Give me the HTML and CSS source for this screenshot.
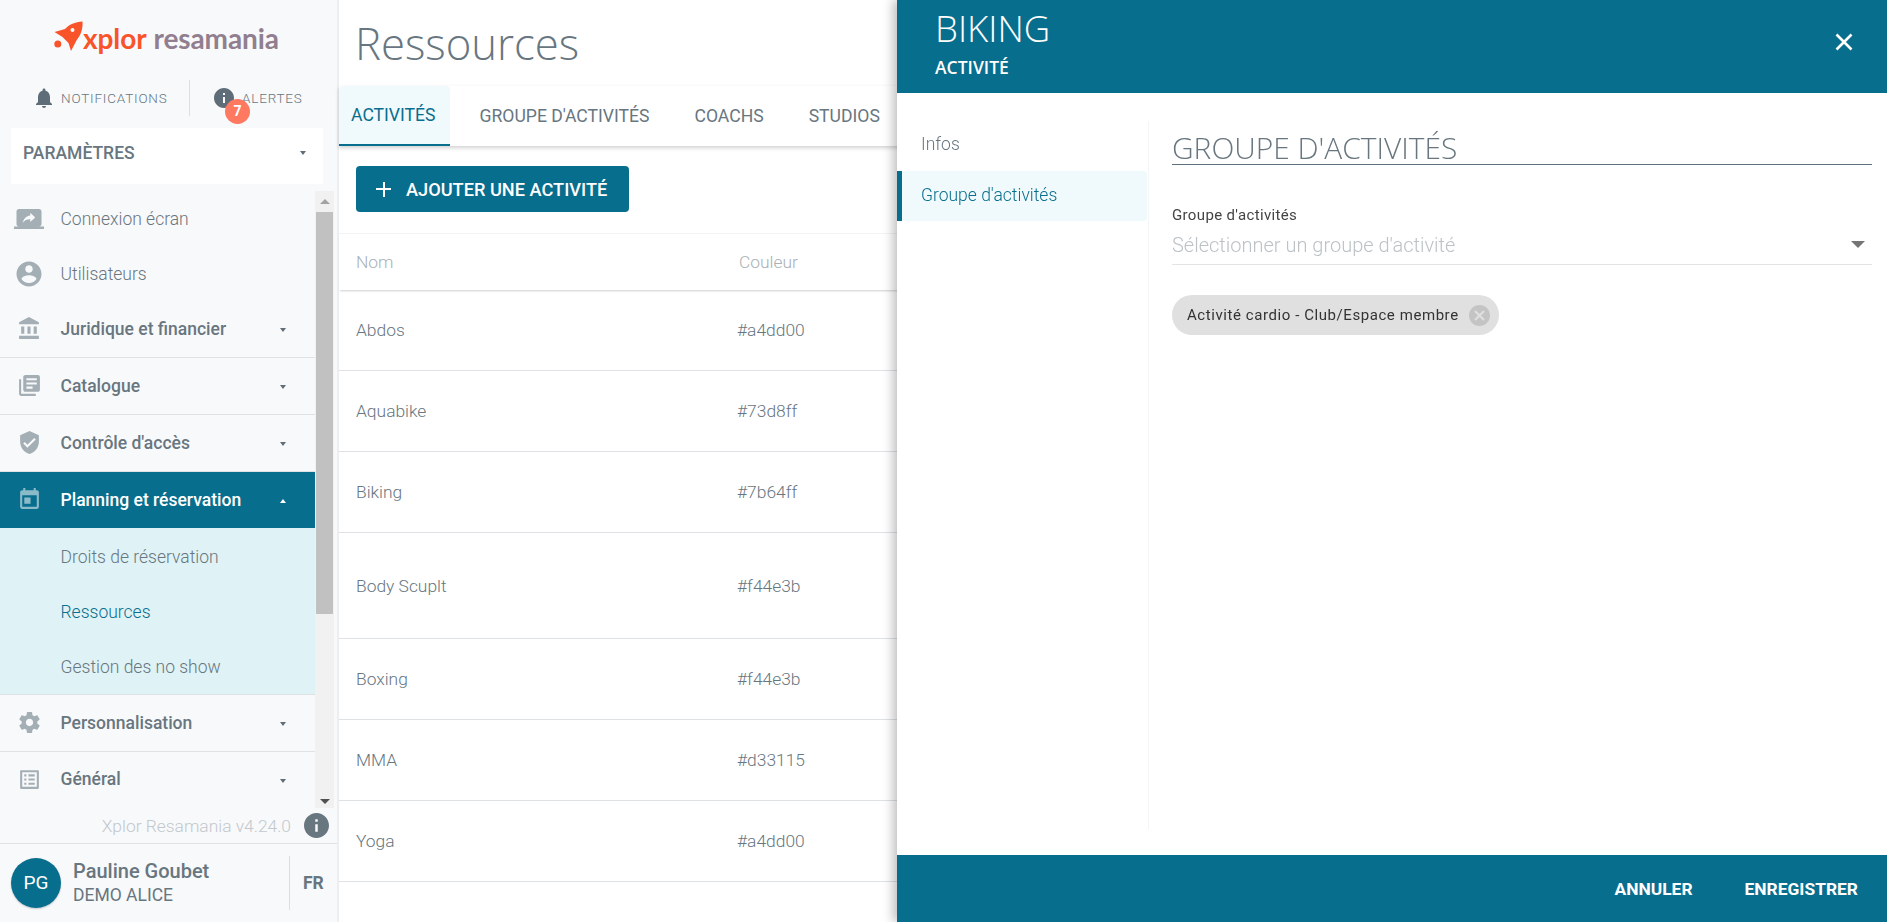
FILE: index.html
```html
<!DOCTYPE html>
<html lang="fr">
<head>
  <meta charset="UTF-8">
  <title>Ressources - Xplor Resamania</title>
  <link rel="stylesheet" href="styles.css">
</head>
<body>
  <svg class="icon-defs" width="0" height="0">
    <symbol id="i-bell" viewBox="0 0 24 24"><path d="M12 22c1.1 0 2-.9 2-2h-4c0 1.1.9 2 2 2zm6-6v-5c0-3.07-1.63-5.64-4.5-6.32V4c0-.83-.67-1.5-1.5-1.5s-1.5.67-1.5 1.5v.68C7.64 5.36 6 7.92 6 11v5l-2 2v1h16v-1l-2-2z"/></symbol>
    <symbol id="i-info" viewBox="2 2 20 20"><path d="M12 2C6.48 2 2 6.48 2 12s4.48 10 10 10 10-4.48 10-10S17.52 2 12 2zm1 15h-2v-6h2v6zm0-8h-2V7h2v2z"/></symbol>
    <symbol id="i-screen" viewBox="0 0 24 24"><path d="M20 18c1.1 0 1.99-.9 1.99-2L22 6c0-1.11-.9-2-2-2H4c-1.11 0-2 .89-2 2v10c0 1.1.89 2 2 2H0v2h24v-2h-4zm-7-3.53v-2.19c-2.78 0-4.61.85-6 2.72.56-2.67 2.11-5.33 6-5.87V7l4 3.73-4 3.74z"/></symbol>
    <symbol id="i-user" viewBox="0 0 24 24"><path d="M12 2C6.48 2 2 6.48 2 12s4.48 10 10 10 10-4.48 10-10S17.52 2 12 2zm0 3c1.66 0 3 1.34 3 3s-1.34 3-3 3-3-1.34-3-3 1.34-3 3-3zm0 14.2c-2.5 0-4.71-1.28-6-3.22.03-1.99 4-3.08 6-3.08 1.99 0 5.97 1.09 6 3.08-1.29 1.94-3.5 3.22-6 3.22z"/></symbol>
    <symbol id="i-bank" viewBox="0 0 24 24"><path d="M4 10v7h3v-7H4zm6 0v7h3v-7h-3zM2 22h19v-3H2v3zm14-12v7h3v-7h-3zm-4.5-9L2 6v2h19V6l-9.5-5z"/></symbol>
    <symbol id="i-books" viewBox="0 0 24 24"><path d="M4 6H2v14c0 1.1.9 2 2 2h14v-2H4V6zm16-4H8c-1.1 0-2 .9-2 2v12c0 1.1.9 2 2 2h12c1.1 0 2-.9 2-2V4c0-1.1-.9-2-2-2zm-1 9H9V9h10v2zm-4 4H9v-2h6v2zm4-8H9V5h10v2z"/></symbol>
    <symbol id="i-shield" viewBox="0 0 24 24"><path d="M12 1L3 5v6c0 5.55 3.84 10.74 9 12 5.16-1.26 9-6.45 9-12V5l-9-4zm-2 16l-4-4 1.41-1.41L10 14.17l6.59-6.59L18 9l-8 8z"/></symbol>
    <symbol id="i-event" viewBox="0 0 24 24"><path d="M6 1h2v2h8V1h2v2h1c1.1 0 2 .9 2 2v14c0 1.1-.9 2-2 2H5c-1.100 0-2-.9-2-2V5c0-1.100.9-2 2-2h1V1zM5 8v11h14V8H5zm2 2h6v6H7v-6z"/></symbol>
    <symbol id="i-gear" viewBox="0 0 24 24"><path d="M19.43 12.98c.04-.32.07-.64.07-.98s-.03-.66-.07-.98l2.11-1.65c.19-.15.24-.42.12-.64l-2-3.46c-.12-.22-.39-.3-.61-.22l-2.49 1c-.52-.4-1.08-.73-1.69-.98l-.38-2.65C14.46 2.18 14.25 2 14 2h-4c-.25 0-.46.18-.49.42l-.38 2.65c-.61.25-1.17.59-1.69.98l-2.49-1c-.23-.09-.49 0-.61.22l-2 3.46c-.13.22-.07.49.12.64l2.11 1.65c-.04.32-.07.65-.07.98s.03.66.07.98l-2.11 1.65c-.19.15-.24.42-.12.64l2 3.46c.12.22.39.3.61.22l2.49-1c.52.4 1.08.73 1.69.98l.38 2.65c.03.24.24.42.49.42h4c.25 0 .46-.18.49-.42l.38-2.65c.61-.25 1.17-.59 1.69-.98l2.49 1c.23.09.49 0 .61-.22l2-3.46c.12-.22.07-.49-.12-.64l-2.11-1.65zM12 15.5c-1.93 0-3.5-1.57-3.5-3.5s1.57-3.5 3.5-3.5 3.5 1.57 3.5 3.5-1.57 3.5-3.5 3.5z"/></symbol>
    <symbol id="i-list" viewBox="0 0 24 24"><path d="M19 5v14H5V5h14m1.1-2H3.9c-.5 0-.9.4-.9.9v16.2c0 .4.4.9.9.9h16.2c.4 0 .9-.5.9-.9V3.9c0-.5-.5-.9-.9-.9zM11 7h6v2h-6V7zm0 4h6v2h-6v-2zm0 4h6v2h-6zM7 7h2v2H7zm0 4h2v2H7zm0 4h2v2H7z"/></symbol>
    <symbol id="i-cancel" viewBox="2 2 20 20"><path d="M12 2C6.47 2 2 6.47 2 12s4.47 10 10 10 10-4.47 10-10S17.53 2 12 2zm5 13.59L15.59 17 12 13.41 8.41 17 7 15.59 10.59 12 7 8.41 8.41 7 12 10.59 15.59 7 17 8.41 13.41 12 17 15.59z"/></symbol>
  </svg>

  <div class="app">
    <aside class="sidebar">
      <div class="logo">
        <svg class="logo-rocket" viewBox="0 0 29 30"><circle cx="3.800" cy="23" r="3.500"/><path fill-rule="evenodd" d="M28.500.5C21 1 15 3.500 11 8L.5 11 8.500 16l6 6L17 30l6-11.500C27 14 29 7.500 28.500.5zM18.500 7a2 2 0 1 0 .01 0z"/></svg>
        <span class="logo-xplor">xplor</span>
        <span class="logo-resa">resamania</span>
      </div>

      <div class="quick-links">
        <div class="quick-link quick-notif">
          <svg class="quick-icon"><use href="#i-bell"/></svg>
          <span>NOTIFICATIONS</span>
        </div>
        <div class="quick-link quick-alert">
          <svg class="quick-info"><use href="#i-info"/></svg>
          <span>ALERTES</span>
          <span class="badge">7</span>
        </div>
      </div>

      <div class="space-select">
        <span>PARAMÈTRES</span>
        <i class="caret"></i>
      </div>

      <div class="menu-wrap">
        <nav class="menu">
          <a class="menu-item plain"><svg class="menu-icon"><use href="#i-screen"/></svg>Connexion écran</a>
          <a class="menu-item plain"><svg class="menu-icon"><use href="#i-user"/></svg>Utilisateurs</a>
          <a class="menu-item group"><svg class="menu-icon"><use href="#i-bank"/></svg>Juridique et financier<i class="caret"></i></a>
          <a class="menu-item group"><svg class="menu-icon"><use href="#i-books"/></svg>Catalogue<i class="caret"></i></a>
          <a class="menu-item group"><svg class="menu-icon"><use href="#i-shield"/></svg>Contrôle d'accès<i class="caret"></i></a>
          <a class="menu-item group open"><svg class="menu-icon"><use href="#i-event"/></svg>Planning et réservation<i class="caret up"></i></a>
          <div class="submenu">
            <a class="sub-item">Droits de réservation</a>
            <a class="sub-item current">Ressources</a>
            <a class="sub-item">Gestion des no show</a>
          </div>
          <a class="menu-item group"><svg class="menu-icon"><use href="#i-gear"/></svg>Personnalisation<i class="caret"></i></a>
          <a class="menu-item group last"><svg class="menu-icon"><use href="#i-list"/></svg>Général<i class="caret"></i></a>
        </nav>
        <div class="scrollbar">
          <i class="scroll-arrow"></i>
          <div class="scroll-thumb"></div>
          <i class="scroll-arrow down"></i>
        </div>
      </div>

      <div class="version">
        <span>Xplor Resamania v4.24.0</span>
        <svg class="version-info"><use href="#i-info"/></svg>
      </div>

      <div class="account">
        <div class="avatar">PG</div>
        <div class="account-text">
          <div class="account-name">Pauline Goubet</div>
          <div class="account-club">DEMO ALICE</div>
        </div>
        <div class="lang">FR</div>
      </div>
    </aside>

    <main class="content">
      <h1 class="page-title">Ressources</h1>
      <div class="tabs">
        <a class="tab active">ACTIVITÉS</a>
        <a class="tab">GROUPE D'ACTIVITÉS</a>
        <a class="tab">COACHS</a>
        <a class="tab">STUDIOS</a>
      </div>
      <div class="toolbar">
        <button class="btn-add"><span class="plus"></span>AJOUTER UNE ACTIVITÉ</button>
      </div>
      <div class="table">
        <div class="table-head"><span class="col-name head-name">Nom</span><span>Couleur</span></div>
        <div class="table-row"><span class="col-name">Abdos</span><span>#a4dd00</span></div>
        <div class="table-row"><span class="col-name">Aquabike</span><span>#73d8ff</span></div>
        <div class="table-row"><span class="col-name">Biking</span><span>#7b64ff</span></div>
        <div class="table-row tall"><span class="col-name">Body Scuplt</span><span>#f44e3b</span></div>
        <div class="table-row"><span class="col-name">Boxing</span><span>#f44e3b</span></div>
        <div class="table-row"><span class="col-name">MMA</span><span>#d33115</span></div>
        <div class="table-row"><span class="col-name">Yoga</span><span>#a4dd00</span></div>
      </div>
    </main>
  </div>

  <section class="drawer">
    <header class="drawer-head">
      <div>
        <div class="drawer-title">BIKING</div>
        <div class="drawer-sub">ACTIVITÉ</div>
      </div>
      <svg class="drawer-close" viewBox="0 0 18 18"><path d="M1.500 1.500l15 15M16.500 1.500l-15 15"/></svg>
    </header>
    <div class="drawer-body">
      <div class="drawer-nav">
        <a class="drawer-link">Infos</a>
        <a class="drawer-link active">Groupe d'activités</a>
      </div>
      <div class="drawer-form">
        <h2 class="form-title">GROUPE D'ACTIVITÉS</h2>
        <label class="field-label">Groupe d'activités</label>
        <div class="field-select">
          <span>Sélectionner un groupe d'activité</span>
          <i class="select-arrow"></i>
        </div>
        <div class="chip">
          <span>Activité cardio - Club/Espace membre</span>
          <svg class="chip-close"><use href="#i-cancel"/></svg>
        </div>
      </div>
    </div>
    <footer class="drawer-foot">
      <a class="foot-btn">ANNULER</a>
      <a class="foot-btn">ENREGISTRER</a>
    </footer>
  </section>
</body>
</html>
```

FILE: styles.css
```css
* {
  box-sizing: border-box;
}

body {
  margin: 0;
  height: 922px;
  overflow: hidden;
  font-family: Roboto, sans-serif;
  color: #68767f;
  background: #fff;
}

.icon-defs {
  position: absolute;
}

.app {
  display: flex;
  height: 922px;
}

/* Sidebar */
.sidebar {
  width: 339px;
  flex: none;
  display: flex;
  flex-direction: column;
  background: #f8f9fb;
  border-right: 2px solid #eceef0;
}

.logo {
  height: 71px;
  flex: none;
  padding: 19px 0 0 54px;
  display: flex;
  align-items: flex-start;
  font-family: Lato, sans-serif;
  font-weight: 700;
  font-size: 28px;
  line-height: 38px;
  letter-spacing: -0.1px;
}

.logo-rocket {
  width: 29px;
  height: 30px;
  margin-top: 2px;
  fill: #f9532a;
}

.logo-xplor {
  color: #f9532a;
  margin-right: 7px;
}

.logo-resa {
  color: #917e8e;
}

.quick-links {
  display: flex;
  height: 57px;
  flex: none;
  align-items: center;
  padding-bottom: 3px;
  font-size: 13.5px;
  font-weight: 300;
  letter-spacing: 0.8px;
}

.quick-link {
  display: flex;
  align-items: center;
  height: 36px;
  position: relative;
}

.quick-notif {
  width: 190px;
  padding-left: 32px;
  border-right: 1px solid #dcdfe2;
}

.quick-alert {
  padding-left: 24px;
}

.quick-icon {
  width: 24px;
  height: 24px;
  fill: #5f6d78;
  margin-right: 5px;
}

.quick-info {
  width: 20px;
  height: 20px;
  fill: #5f6d78;
  margin-right: 8px;
}

.badge {
  position: absolute;
  left: 35px;
  top: 19px;
  width: 25px;
  height: 25px;
  border-radius: 50%;
  background: #ff7860;
  color: #fff;
  font-size: 14px;
  font-weight: 700;
  letter-spacing: 0;
  line-height: 25px;
  text-align: center;
}

.space-select {
  margin: 0 14px 0 11px;
  height: 56px;
  flex: none;
  background: #fff;
  display: flex;
  align-items: center;
  justify-content: space-between;
  padding: 0 17px 6px 12px;
  font-size: 17.5px;
  font-weight: 500;
}

.caret {
  width: 0;
  height: 0;
  border-left: 3.5px solid transparent;
  border-right: 3.5px solid transparent;
  border-top: 4.5px solid #5f6d78;
}

.caret.up {
  border-top: 0;
  border-bottom: 4.5px solid #fff;
}

.menu-wrap {
  display: flex;
  height: 617px;
  margin-top: 7px;
  flex: none;
}

.menu {
  width: 315px;
  flex: none;
}

.menu-item {
  display: flex;
  align-items: center;
  padding-left: 60.5px;
  position: relative;
}

.plain {
  height: 55px;
  font-size: 17.5px;
  font-weight: 300;
}

.group {
  height: 57px;
  font-weight: 500;
  font-size: 17.5px;
  border-bottom: 1px solid #dfe2e5;
}

.group.open {
  height: 56px;
  background: #086e8e;
  color: #fff;
  border-bottom: 0;
}

.group.last {
  height: 56px;
  padding-bottom: 2px;
  border-bottom: 0;
}

.group .caret {
  position: absolute;
  left: 279.5px;
  top: 27px;
}

.menu-icon {
  position: absolute;
  left: 16.5px;
  top: 50%;
  margin-top: -13px;
  width: 25px;
  height: 25px;
  fill: #a3aeb5;
}

.plain .menu-icon {
  left: 14px;
  margin-top: -15px;
  width: 30px;
  height: 30px;
}

.open .menu-icon {
  fill: #8bbac9;
}

.submenu {
  background: #dff2f6;
  height: 167px;
  padding-top: 1px;
  border-bottom: 1px solid #dfe2e5;
}

.sub-item {
  display: flex;
  align-items: center;
  height: 55px;
  padding-left: 60.5px;
  font-size: 17.5px;
  font-weight: 300;
}

.sub-item.current {
  color: #086e8e;
}

.scrollbar {
  width: 19px;
  background: #f1f1f1;
  display: flex;
  flex-direction: column;
  align-items: center;
  padding: 8px 0 4px;
}

.scroll-arrow {
  width: 0;
  height: 0;
  border-left: 5px solid transparent;
  border-right: 5px solid transparent;
  border-bottom: 5px solid #a3a3a3;
}

.scroll-arrow.down {
  margin-top: auto;
  border-bottom: 0;
  border-top: 5px solid #505050;
}

.scroll-thumb {
  width: 17px;
  height: 402px;
  margin-top: 8px;
  background: #c1c1c1;
}

.version {
  height: 36px;
  flex: none;
  display: flex;
  align-items: center;
  justify-content: flex-end;
  padding-right: 8px;
  font-size: 17.4px;
  font-weight: 300;
  color: #c2c8cc;
  border-bottom: 1px solid #dfe2e5;
}

.version-info {
  width: 25px;
  height: 25px;
  fill: #68767f;
  margin-left: 13px;
}

.account {
  flex: 1;
  display: flex;
  align-items: center;
  padding-left: 11px;
}

.avatar {
  width: 50px;
  height: 50px;
  border-radius: 50%;
  background: #086e8e;
  color: #fff;
  font-size: 19px;
  line-height: 50px;
  text-align: center;
  box-shadow: 0 1px 2px rgba(0, 0, 0, 0.2);
}

.account-text {
  width: 228px;
  padding: 0 0 2px 12px;
}

.account-name {
  font-size: 20px;
  font-weight: 500;
  line-height: 25px;
}

.account-club {
  font-size: 17.5px;
  line-height: 22px;
}

.lang {
  height: 54px;
  line-height: 54px;
  padding-left: 13px;
  border-left: 1px solid #dcdfe2;
  font-size: 17.5px;
  font-weight: 700;
}

/* Main content */
.content {
  flex: 1;
  min-width: 0;
}

.page-title {
  margin: 0;
  height: 86px;
  padding-left: 16px;
  font-family: "Open Sans", sans-serif;
  font-size: 43.7px;
  font-weight: 300;
  line-height: 86px;
  color: #68767f;
}

.tabs {
  display: flex;
  height: 60px;
  box-shadow: 0 2px 4px rgba(0, 0, 0, 0.18);
  font-size: 17.6px;
}

.tab {
  display: flex;
  align-items: center;
  padding: 0 22.5px;
}

.tab.active {
  width: 111px;
  padding: 0 0 0 12px;
  margin-right: 7px;
  color: #086e8e;
  background: #f0f9fb;
  border-radius: 4px 4px 0 0;
  border-bottom: 2px solid #086e8e;
}

.toolbar {
  height: 87px;
  padding: 20px 0 0 17px;
}

.btn-add {
  display: flex;
  align-items: center;
  width: 273px;
  height: 46px;
  padding: 0 0 0 20px;
  border: 0;
  border-radius: 4px;
  background: #086e8e;
  color: #fff;
  font-family: Roboto, sans-serif;
  font-size: 18.2px;
  font-weight: 500;
}

.plus {
  width: 15px;
  height: 15px;
  margin-right: 15px;
  background: linear-gradient(#fff, #fff) center / 100% 2px no-repeat, linear-gradient(#fff, #fff) center / 2px 100% no-repeat;
}

.table {
  border-top: 1px solid #f2f3f4;
  font-weight: 300;
  font-size: 17.4px;
}

.table-head,
.table-row {
  display: flex;
  align-items: center;
}

.table-head {
  height: 56px;
  padding-bottom: 1px;
  color: #a9b1b6;
  box-shadow: 0 2px 2px -1px rgba(0, 0, 0, 0.2);
}

.table-row {
  height: 81px;
  border-bottom: 1px solid #dfe2e5;
  color: #68767f;
}

.table-row.tall {
  height: 106px;
}

.col-name {
  width: 398px;
  padding-left: 17px;
}

.head-name {
  width: 400px;
}

/* Drawer lying over the page */
.drawer {
  position: fixed;
  left: 897px;
  top: 0;
  width: 990px;
  height: 922px;
  display: flex;
  flex-direction: column;
  background: #fff;
  box-shadow: -4px 0 10px rgba(0, 0, 0, 0.25);
}

.drawer-head {
  height: 93px;
  flex: none;
  display: flex;
  justify-content: space-between;
  background: #086e8e;
  color: #fff;
  padding: 0 34px 0 38px;
}

.drawer-title {
  font-family: "Open Sans", sans-serif;
  font-size: 36.5px;
  font-weight: 300;
  line-height: 56px;
}

.drawer-sub {
  font-family: "Open Sans", sans-serif;
  font-size: 17.5px;
  font-weight: 600;
  line-height: 22px;
}

.drawer-close {
  width: 18px;
  height: 18px;
  margin-top: 33px;
  stroke: #fff;
  stroke-width: 2.6;
  fill: none;
}

.drawer-body {
  flex: 1;
  display: flex;
  padding-top: 28px;
}

.drawer-nav {
  width: 252px;
  height: 708px;
  flex: none;
  border-right: 1px solid #f4f5f6;
  font-weight: 300;
  font-size: 17.5px;
}

.drawer-link {
  display: flex;
  align-items: center;
  height: 50px;
  width: 250px;
  padding: 0 0 5px 24px;
}

.drawer-link.active {
  padding: 0 0 2px 19px;
  color: #086e8e;
  background: #f0f9fb;
  border-left: 5px solid #086e8e;
  border-radius: 0 4px 4px 0;
}

.drawer-form {
  flex: 1;
  padding: 0 15px 0 23px;
}

.form-title {
  margin: 0;
  height: 44px;
  font-family: "Open Sans", sans-serif;
  font-size: 29.9px;
  font-weight: 300;
  line-height: 53px;
  border-bottom: 1px solid #5f7180;
}

.field-label {
  display: block;
  margin-top: 40px;
  font-size: 15px;
  line-height: 20px;
  letter-spacing: 0.35px;
  color: #444;
}

.field-select {
  display: flex;
  align-items: center;
  justify-content: space-between;
  height: 40px;
  padding: 0 7px 0 0;
  border-bottom: 1px solid #e4e4e4;
  font-size: 20px;
  font-weight: 300;
  color: #bcc2c6;
}

.select-arrow {
  width: 0;
  height: 0;
  border-left: 7px solid transparent;
  border-right: 7px solid transparent;
  border-top: 7px solid #757575;
}

.chip {
  display: inline-flex;
  align-items: center;
  height: 40px;
  margin-top: 30px;
  padding: 0 9px 0 15px;
  border-radius: 20px;
  background: #e0e0e0;
  color: #333;
  font-size: 15px;
  letter-spacing: 0.57px;
}

.chip-close {
  width: 21px;
  height: 21px;
  margin-left: 10px;
  fill: #c4c4c4;
}

.drawer-foot {
  height: 67px;
  flex: none;
  display: flex;
  align-items: center;
  justify-content: flex-end;
  gap: 52px;
  padding: 0 29px 0 0;
  background: #086e8e;
}

.foot-btn {
  color: #fff;
  font-size: 17.4px;
  font-weight: 700;
}
```
